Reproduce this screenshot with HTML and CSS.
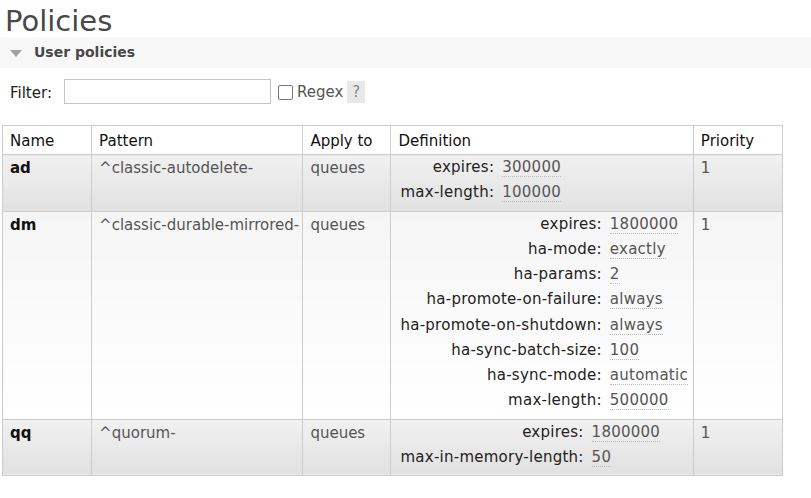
FILE: index.html
```html
<!DOCTYPE html>
<html>
<head>
<meta charset="utf-8">
<link rel="stylesheet" href="styles.css">
</head>
<body>
<h1 class="title">Policies</h1>
<div class="section-bar">
  <span class="tri"></span>
  <span class="section-title">User policies</span>
</div>
<div class="filter-row">
  <label class="filter-label">Filter:</label>
  <input class="filter-input" type="text">
  <span class="checkbox"></span>
  <span class="regex">Regex</span>
  <span class="help">?</span>
</div>
<table class="list">
  <colgroup>
    <col class="c-name"><col class="c-pattern"><col class="c-apply"><col class="c-def"><col class="c-prio">
  </colgroup>
  <thead>
    <tr><th>Name</th><th>Pattern</th><th>Apply to</th><th>Definition</th><th>Priority</th></tr>
  </thead>
  <tbody>
    <tr class="alt1">
      <td class="name">ad</td>
      <td>^classic-autodelete-</td>
      <td>queues</td>
      <td class="def">
        <table class="facts">
          <tr><th>expires:</th><td><abbr>300000</abbr></td></tr>
          <tr><th>max-length:</th><td><abbr>100000</abbr></td></tr>
        </table>
      </td>
      <td>1</td>
    </tr>
    <tr class="alt2">
      <td class="name">dm</td>
      <td>^classic-durable-mirrored-</td>
      <td>queues</td>
      <td class="def">
        <table class="facts">
          <tr><th>expires:</th><td><abbr>1800000</abbr></td></tr>
          <tr><th>ha-mode:</th><td><abbr>exactly</abbr></td></tr>
          <tr><th>ha-params:</th><td><abbr>2</abbr></td></tr>
          <tr><th>ha-promote-on-failure:</th><td><abbr>always</abbr></td></tr>
          <tr><th>ha-promote-on-shutdown:</th><td><abbr>always</abbr></td></tr>
          <tr><th>ha-sync-batch-size:</th><td><abbr>100</abbr></td></tr>
          <tr><th>ha-sync-mode:</th><td><abbr>automatic</abbr></td></tr>
          <tr><th>max-length:</th><td><abbr>500000</abbr></td></tr>
        </table>
      </td>
      <td>1</td>
    </tr>
    <tr class="alt1">
      <td class="name">qq</td>
      <td>^quorum-</td>
      <td>queues</td>
      <td class="def">
        <table class="facts">
          <tr><th>expires:</th><td><abbr>1800000</abbr></td></tr>
          <tr><th>max-in-memory-length:</th><td><abbr>50</abbr></td></tr>
        </table>
      </td>
      <td>1</td>
    </tr>
  </tbody>
</table>
</body>
</html>
```

FILE: styles.css
```css
html, body {
  margin: 0;
  padding: 0;
  background: #fff;
}
body {
  font-family: "DejaVu Sans", Verdana, sans-serif;
  font-size: 15px;
  color: #555;
}
.title {
  margin: 0;
  padding: 5px 0 0 5px;
  height: 32px;
  line-height: 32px;
  font-size: 29px;
  font-weight: normal;
  color: #484848;
}
.section-bar {
  height: 31px;
  background: #f8f8f8;
  display: flex;
  align-items: center;
  padding-left: 10px;
}
.tri {
  width: 0;
  height: 0;
  border-left: 6px solid transparent;
  border-right: 6px solid transparent;
  border-top: 7px solid #a0a0a0;
  margin-top: 2px;
  margin-right: 12px;
}
.section-title {
  font-size: 14px;
  font-weight: bold;
  color: #484848;
  line-height: 31px;
}
.filter-row {
  display: flex;
  align-items: center;
  margin-top: 11px;
  height: 25px;
  padding-left: 10px;
  color: #222;
}
.filter-label {
  line-height: 18px;
  margin-top: 3px;
}
.filter-input {
  box-sizing: border-box;
  width: 207px;
  height: 25px;
  margin: 0 0 0 12px;
  border: 1px solid #c4c4c4;
  padding: 0 4px;
  background: #fff;
  font: inherit;
}
.checkbox {
  box-sizing: border-box;
  width: 15px;
  height: 15px;
  border: 1px solid #777;
  border-radius: 2px;
  margin-left: 7px;
  margin-top: 2px;
  background: #fff;
}
.regex {
  margin-left: 4px;
  color: #555;
  line-height: 18px;
}
.help {
  display: inline-block;
  margin-left: 4px;
  width: 18px;
  height: 22px;
  line-height: 22px;
  text-align: center;
  background: #e8e8e8;
  color: #888;
  font-size: 15px;
}
table.list {
  margin: 21px 0 0 2px;
  border-collapse: collapse;
  table-layout: fixed;
  width: 781px;
}
col.c-name { width: 89px; }
col.c-pattern { width: 211px; }
col.c-apply { width: 88px; }
col.c-def { width: 302px; }
col.c-prio { width: 89px; }
table.list > thead > tr > th,
table.list > tbody > tr > td {
  border: 1px solid #ccc;
  text-align: left;
  vertical-align: top;
  line-height: 18px;
  white-space: nowrap;
}
table.list > thead > tr > th {
  font-weight: normal;
  color: #111;
  padding: 6px 7px 4px 7px;
  background: #fff;
}
table.list > tbody > tr > td {
  padding: 4px 7px 0 7px;
}
table.list > tbody > tr > td.name {
  font-weight: bold;
  color: #111;
}
table.list > tbody > tr > td.def {
  padding: 0 7px 5px 7px;
}
tr.alt1 > td {
  background: linear-gradient(#f1f1f1, #e1e1e1);
}
tr.alt2 > td {
  background: linear-gradient(#f5f5f5, #ffffff);
}
table.facts {
  border-collapse: collapse;
}
table.facts th {
  text-align: right;
  font-weight: normal;
  color: #222;
  padding: 3px 8px 4px 2px;
  line-height: 18.25px;
  letter-spacing: 0.25px;
  white-space: nowrap;
}
table.facts td {
  text-align: left;
  padding: 3px 0 4px 0;
  line-height: 18.25px;
  color: #555;
  letter-spacing: 0.25px;
  white-space: nowrap;
}
abbr {
  text-decoration: none;
  border-bottom: 1px dotted #bbb;
}
```
